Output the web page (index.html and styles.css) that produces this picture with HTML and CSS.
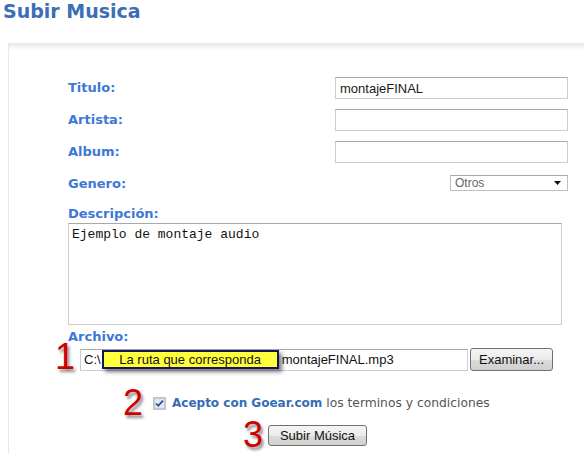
FILE: index.html
```html
<!DOCTYPE html>
<html lang="es">
<head>
    <meta charset="UTF-8">
    <meta name="viewport" content="width=device-width, initial-scale=1.0">
    <title>Subir Musica</title>
    <link rel="stylesheet" href="styles.css">
</head>
<body>
    <h1 class="page-title">Subir Musica</h1>
    <div class="panel">
        <form class="upload-form">
            <div class="field-grid">
                <label class="field-label">Titulo:</label>
                <input class="text-input" type="text" value="montajeFINAL">
                <label class="field-label">Artista:</label>
                <input class="text-input" type="text" value="">
                <label class="field-label">Album:</label>
                <input class="text-input" type="text" value="">
                <label class="field-label">Genero:</label>
                <div class="select-box">
                    <span>Otros</span>
                    <svg width="7" height="4" viewBox="0 0 7 4"><path d="M0 0h7L3.5 4z" fill="#111"/></svg>
                </div>
            </div>

            <label class="field-label block-label desc-label">Descripción:</label>
            <textarea class="desc-area">Ejemplo de montaje audio</textarea>

            <label class="field-label block-label file-label">Archivo:</label>
            <div class="step-row file-row">
                <span class="step-num">1</span>
                <div class="file-box">
                    <span>C:\</span>
                    <span class="path-tag">La ruta que corresponda</span>
                    <span class="file-name">montajeFINAL.mp3</span>
                </div>
                <button type="button" class="btn btn-browse">Examinar...</button>
            </div>

            <div class="step-row terms-row">
                <span class="step-num">2</span>
                <svg class="check" width="13" height="13" viewBox="0 0 13 13">
                    <rect x="0.5" y="0.5" width="12" height="12" fill="#eef0f3" stroke="#8a8f99" stroke-dasharray="1 1"/>
                    <rect x="1.5" y="1.5" width="10" height="10" fill="#e4e8ee" stroke="#c3cad4"/>
                    <path d="M3 6.5l2.2 2.3L10 3.6" fill="none" stroke="#2a4c9c" stroke-width="1.8"/>
                </svg>
                <span class="terms-text"><strong>Acepto con Goear.com</strong> los terminos y condiciones</span>
            </div>

            <div class="step-row submit-row">
                <span class="step-num">3</span>
                <button type="button" class="btn btn-submit">Subir Música</button>
            </div>
        </form>
    </div>
</body>
</html>
```

FILE: styles.css
```css
html, body {
    margin: 0;
    padding: 0;
    background: #fff;
    font-family: "DejaVu Sans", Verdana, sans-serif;
}
.page-title {
    margin: 0;
    padding: 0 0 0 3px;
    font-size: 19px;
    line-height: 23px;
    color: #3a6eb6;
}
.panel {
    margin: 20px 0 0 8px;
    border-left: 1px solid #e8e8e8;
    background: linear-gradient(to bottom, #e6e6e6, #fff 7px);
    padding: 34px 16px 20px 59px;
}
.field-grid {
    display: grid;
    grid-template-columns: 267px 233px;
    grid-auto-rows: 22px;
    row-gap: 10px;
    align-items: center;
}
.field-label {
    font-size: 13px;
    line-height: 16px;
    font-weight: bold;
    color: #3d78d6;
}
.block-label {
    display: block;
}
.text-input {
    box-sizing: border-box;
    width: 233px;
    height: 22px;
    margin: 0;
    padding: 0 4px;
    border: 1px solid #cdcdcd;
    border-top-color: #a8a8a8;
    font: 13px "Liberation Sans", Arial, sans-serif;
    color: #1a1a1a;
    outline: none;
}
.select-box {
    justify-self: end;
    align-self: end;
    margin-bottom: 4px;
    box-sizing: border-box;
    width: 118px;
    height: 16px;
    border: 1px solid #c0c0c0;
    border-top-color: #a8a8a8;
    display: flex;
    align-items: center;
    justify-content: space-between;
    padding: 0 6px 0 4px;
    font: 12px "Liberation Sans", Arial, sans-serif;
    color: #666;
}
.desc-label {
    margin-top: 11px;
    margin-bottom: 1px;
}
.desc-area {
    display: block;
    box-sizing: border-box;
    width: 494px;
    height: 102px;
    margin: 0;
    padding: 3px 3px;
    border: 1px solid #cdcdcd;
    border-top-color: #a8a8a8;
    font: 13px/15px "Liberation Mono", "Courier New", monospace;
    color: #111;
    resize: none;
    outline: none;
}
.file-label {
    margin-top: 4px;
}
.step-row {
    display: flex;
    align-items: center;
}
.step-num {
    font: 36px/40px "Liberation Sans", Arial, sans-serif;
    color: #cf0000;
    text-shadow: 2px 3px 3px rgba(0, 0, 0, 0.45);
    margin: -5px 0;
}
.file-row {
    margin: 3px 0 0 -13px;
}
.file-row .step-num {
    width: 25px;
    margin: -12px 0 -6px;
}
.file-box {
    box-sizing: border-box;
    width: 388px;
    height: 22px;
    border: 1px solid #cdcdcd;
    border-top-color: #a8a8a8;
    display: flex;
    align-items: center;
    padding-left: 3px;
    font: 13px "Liberation Sans", Arial, sans-serif;
    color: #111;
}
.path-tag {
    box-sizing: border-box;
    width: 177px;
    height: 19px;
    margin-left: 1px;
    border: 2px solid #14145a;
    background: #ffff3c;
    box-shadow: 3px 3px 4px rgba(0, 0, 0, 0.5);
    font-size: 13px;
    line-height: 15px;
    text-align: center;
}
.file-name {
    margin-left: 3px;
}
.btn {
    box-sizing: border-box;
    margin: 0;
    padding: 0;
    border: 1px solid #707070;
    border-radius: 3px;
    background: linear-gradient(to bottom, #f5f5f5 0%, #ebebeb 50%, #dcdcdc 51%, #cfcfcf 100%);
    font: 13px "Liberation Sans", Arial, sans-serif;
    color: #111;
}
.btn-browse {
    width: 83px;
    height: 23px;
    margin-left: 2px;
}
.terms-row {
    margin: 15px 0 0 55px;
    height: 34px;
}
.terms-row .step-num {
    width: 30px;
}
.check {
    display: block;
}
.terms-text {
    margin-left: 6px;
    font-size: 12.3px;
    color: #555;
}
.terms-text strong {
    font-size: 12px;
    color: #356db5;
}
.submit-row {
    margin: 0 0 0 175px;
    height: 30px;
}
.submit-row .step-num {
    width: 25px;
}
.btn-submit {
    width: 99px;
    height: 21px;
}
```
